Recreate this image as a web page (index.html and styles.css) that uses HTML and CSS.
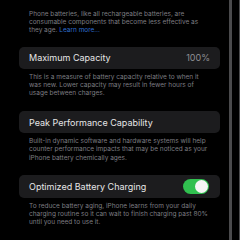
FILE: index.html
```html
<!DOCTYPE html>
<html>
<head>
<meta charset="utf-8">
<link rel="stylesheet" href="styles.css">
</head>
<body>
<div class="screen">
  <main class="content">
    <p class="note note-first">Phone batteries, like all rechargeable batteries, are consumable components that become less effective as they age. <span class="link">Learn more…</span></p>
    <div class="card"><span class="label">Maximum Capacity</span><span class="value">100%</span></div>
    <p class="note">This is a measure of battery capacity relative to when it was new. Lower capacity may result in fewer hours of usage between charges.</p>
    <div class="card card-2"><span class="label">Peak Performance Capability</span></div>
    <p class="note">Built-in dynamic software and hardware systems will help counter performance impacts that may be noticed as your iPhone battery chemically ages.</p>
    <div class="card card-3"><span class="label">Optimized Battery Charging</span><span class="toggle"><span class="knob"></span></span></div>
    <p class="note">To reduce battery aging, iPhone learns from your daily charging routine so it can wait to finish charging past 80% until you need to use it.</p>
  </main>
  <div class="edge edge-a"></div>
  <div class="gapcol"></div>
  <div class="edge edge-b"></div>
</div>
</body>
</html>
```
FILE: styles.css
```css
html, body {
  margin: 0;
  padding: 0;
  background: #000;
  width: 240px;
  height: 240px;
  overflow: hidden;
}
.screen {
  display: flex;
  width: 240px;
  height: 240px;
  font-family: Inter, "Noto Sans", sans-serif;
}
.content {
  width: 201px;
  padding-left: 19px;
  padding-right: 9px;
  flex: none;
}
.edge {
  flex: none;
  background: #4a4a4c;
  height: 240px;
}
.edge-a { width: 3px; }
.gapcol { width: 7px; flex: none; }
.edge-b { width: 1px; }
.note {
  margin: 4px 0 0;
  padding: 0 8px 0 10px;
  font-size: 6.5px;
  line-height: 8.2px;
  color: #7d7d82;
}
.note-first {
  margin-top: 10px;
}
.link { color: #2f6fd0; }
.card {
  display: flex;
  align-items: center;
  justify-content: space-between;
  height: 22px;
  margin-top: 12px;
  padding: 0 10px;
  background: #1c1c1e;
  border-radius: 5px;
  font-size: 9px;
  color: #e6e6e6;
}
.card-2 { margin-top: 14px; }
.card-3 { height: 23px; margin-top: 13px; padding-right: 11px; }
.value { color: #8e8e93; }
.toggle {
  width: 26px;
  height: 15px;
  border-radius: 8px;
  background: #30c04f;
  display: flex;
  align-items: center;
  justify-content: flex-end;
  padding: 0 1px;
  box-sizing: border-box;
}
.knob {
  width: 13px;
  height: 13px;
  border-radius: 50%;
  background: #f4f4f4;
}
```
